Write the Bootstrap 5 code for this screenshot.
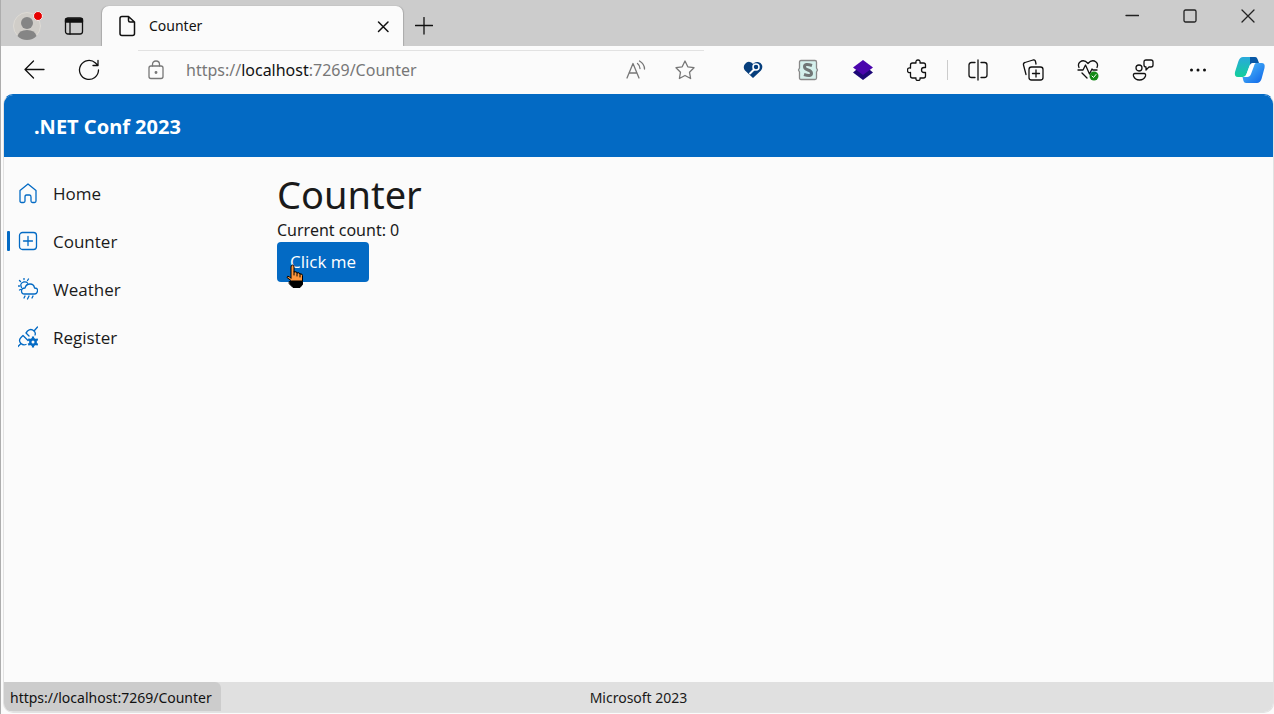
<!DOCTYPE html>
<html lang="en">
<head>
<meta charset="utf-8">
<meta name="viewport" content="width=device-width, initial-scale=1">
<title>Counter</title>
<link href="https://cdn.jsdelivr.net/npm/bootstrap@5.3.0/dist/css/bootstrap.min.css" rel="stylesheet">
<style>
:root { --blue: #036ac4; --page: #fbfbfb; }
body { font-family: "Noto Sans", "Open Sans", sans-serif; font-size: 16px; line-height: 24px; color: #1a1a1a; background: var(--page); }
button { color: inherit; }
svg { display: block; fill: none; stroke: currentColor; stroke-width: 1.3; stroke-linecap: round; stroke-linejoin: round; flex: none; }
.solid { stroke: none; }
.browser { border-left: 1px solid #adadad; }
.tab-strip { height: 46px; background: #ccc; color: #111; }
.strip-btn { width: 41px; height: 46px; padding: 5px 0 0; border: 0; background: none; display: grid; place-items: center; }
.profile { width: 52px; }
.page-tab { width: 301px; height: 40px; margin-left: 8px; padding: 0 12px 0 15px; background: var(--page); border-radius: 7px 7px 0 0; font-size: 14px; box-shadow: -1px 0 1px #aaa, 1px 0 1px #aaa; clip-path: inset(-2px -3px 0); }
.page-tab .page-icon { margin-right: 12px; }
.plain-btn { border: 0; background: none; padding: 0; }
.window-btns { gap: 6px; }
.window-btn { width: 52px; height: 32px; display: grid; place-items: center; color: #222; }
.toolbar { height: 48px; padding-left: 5px; color: #111; }
.tool-btn { width: 55px; height: 46px; display: grid; place-items: center; border: 0; background: none; padding: 0; flex: none; }
.copilot { width: 49px; }
.address { height: 40px; margin: 0 16px 0 6px; padding: 0 0 0 20px; border-radius: 20px; color: #777; font-size: 16px; position: relative; }
.address::before { content: ""; position: absolute; top: 0; left: 16px; right: 5px; border-top: 1px solid #e2e2e2; }
.address b { font-weight: 400; color: #111; }
.address-btn { width: 49px; height: 36px; display: grid; place-items: center; color: #777; }
.tool-rule { height: 20px; width: 1px; margin: 0 2px; background: #ccc; }
.app { margin: 0 0 1px 2px; border: 1px solid #e2e2e2; border-top-color: var(--blue); border-radius: 10px; overflow: hidden; }
.app-header { height: 62px; background: var(--blue); color: #fff; padding: 2px 30px 0; font-size: 20px; font-weight: 700; }
.app-nav { width: 240px; padding-top: 16px; flex: none; }
.nav-item-link { height: 40px; padding-left: 14px; gap: 15px; font-family: "Open Sans", "Noto Sans", sans-serif; font-size: 17px; color: #1a1a1a; text-decoration: none; position: relative; }
.nav-item-link span { padding-top: 2px; }
.nav-item-link svg { color: var(--blue); }
.nav-item-link.active::before { content: ""; position: absolute; left: 3px; top: 10px; width: 3px; height: 20px; border-radius: 1px; background: var(--blue); }
.app-main { padding: 13px 16px 16px 33px; }
.app-main h1 { font-size: 38px; line-height: 48px; font-weight: 400; margin: 0; }
.count-btn { height: 40px; padding: 0 13px; border: 0; border-radius: 4px; background: var(--blue); color: #fff; font-family: "Open Sans", "Noto Sans", sans-serif; font-size: 17px; }
.pointer { position: absolute; left: 8px; top: 22px; stroke-width: 1; }
.app-footer { height: 30px; padding-top: 1px; background: #e0e0e0; font-size: 14px; position: relative; }
.status { position: absolute; left: 0; top: 0; height: 29px; padding: 2px 9px 0 6px; background: #ccc; border-radius: 0 6px 0 0; color: #111; }
</style>
</head>
<body>
<div class="browser min-vh-100 d-flex flex-column">
  <div class="tab-strip d-flex">
    <button class="strip-btn profile" aria-label="Profile">
      <svg class="solid" width="32" height="32" viewBox="0 0 32 32"><circle cx="16" cy="16" r="13.500" fill="#d0cdc8" stroke="#dedbd5" stroke-width="1"/><circle cx="16" cy="13" r="6" fill="#858585"/><path d="M6.500 26Q8 20 16 20t9.500 6q-3.500 4-9.500 4t-9.500-4z" fill="#858585"/><circle cx="27" cy="6" r="4.500" fill="#e60000" stroke="#eee" stroke-width="1"/></svg>
    </button>
    <button class="strip-btn" aria-label="Tab actions">
      <svg width="20" height="20" viewBox="0 0 20 20"><rect x="1.500" y="2" width="17" height="16" rx="2.500"/><path d="M6 6v12"/><path d="M1.500 3h17v3h-17z" fill="currentColor"/></svg>
    </button>
    <div class="page-tab d-flex align-items-center align-self-end">
      <svg class="page-icon" width="20" height="22" viewBox="0 0 20 22"><path d="M5 1.500h6.500L17.500 7v11.500q0 2-2 2H5q-2 0-2-2v-15q0-2 2-2zM11.500 1.500v4q0 1.500 1.500 1.500h4.500" stroke-width="1.500"/></svg>
      <span class="flex-grow-1">Counter</span>
      <button class="plain-btn" aria-label="Close tab"><svg width="16" height="16" viewBox="0 0 16 16"><path d="M3.500 4l9.500 9.500M13 4l-9.500 9.500" stroke-width="1.500"/></svg></button>
    </div>
    <button class="strip-btn" aria-label="New tab"><svg width="18" height="18" viewBox="0 0 18 18"><path d="M.5 8.500h17M9 .5v16.500"/></svg></button>
    <div class="window-btns ms-auto d-flex">
      <button class="plain-btn window-btn" aria-label="Minimize"><svg width="14" height="14" viewBox="0 0 14 14"><path d="M1 6.500h12.500"/></svg></button>
      <button class="plain-btn window-btn" aria-label="Maximize"><svg width="14" height="14" viewBox="0 0 14 14"><rect x="1" y="1" width="12" height="12" rx="1.500"/></svg></button>
      <button class="plain-btn window-btn" aria-label="Close"><svg width="14" height="14" viewBox="0 0 14 14"><path d="M1 1l12 12M13 1L1 13"/></svg></button>
    </div>
  </div>

  <div class="toolbar d-flex align-items-center">
    <button class="tool-btn" aria-label="Back"><svg width="22" height="20" viewBox="0 0 22 20"><path d="M2 9.500h19M10.500 1L2 9.500l8.500 8.500"/></svg></button>
    <button class="tool-btn" aria-label="Refresh"><svg width="22" height="22" viewBox="0 0 22 22"><path d="M20.500 11a9.500 9.500 0 1 1-3-7L20 6.500M20 1.500v5h-5"/></svg></button>
    <div class="address flex-grow-1 d-flex align-items-center">
      <svg class="ms-1 me-3" width="20" height="20" viewBox="0 0 20 20"><rect x="3" y="6" width="14" height="12.500" rx="2"/><path d="M6.500 6V4.500q0-3.500 3.500-3.500t3.500 3.500V6"/><circle cx="10" cy="12.500" r=".8" fill="currentColor"/></svg>
      <div class="flex-grow-1 ms-1" role="textbox" contenteditable="true" spellcheck="false" aria-label="Address">https://<b>localhost</b>:7269/Counter</div>
      <button class="plain-btn address-btn" aria-label="Read aloud"><svg width="20" height="20" viewBox="0 0 20 20"><path d="M1 18L7 3.500 13 18M3 13h8M11.500 3.500q2.500 2 2.500 5M13.500 1q5 3 5 8"/></svg></button>
      <button class="plain-btn address-btn" aria-label="Favorite"><svg width="22" height="22" viewBox="0 0 22 22"><path d="M11 2l2.800 5.800 6.200.9-4.500 4.500 1.100 6.300L11 16.500l-5.600 3 1.100-6.300L2 8.700l6.200-.9z"/></svg></button>
    </div>
    <button class="tool-btn" aria-label="Health extension"><svg class="solid" width="20" height="18" viewBox="0 0 20 18"><path d="M10 17L2 9.500Q-.5 6 2 3t5-2q2 .5 3 2 2-2.500 5-2t4 3q1 3-1 5.500z" fill="#063e7c"/><circle cx="13" cy="6" r="3" stroke="#fff" stroke-width="1.500"/><path d="M11 8.500L7 12.500" stroke="#fff" stroke-width="2"/></svg></button>
    <button class="tool-btn" aria-label="Script extension"><svg width="22" height="22" viewBox="0 0 22 22"><path d="M4 1.500h14q1.500 0 1.500 1.500v6l1 2-1 2v6q0 1.500-1.500 1.500H4q-1.500 0-1.500-1.500v-6l-1-2 1-2V3q0-1.500 1.500-1.500z" fill="#d4f0ec" stroke="#888"/><path d="M15 6.500q-7.500-2.500-7.500 1.300 0 2 3.500 3.200t3.500 3.200q0 3.800-7.500 1.300" stroke="#707676" stroke-width="3" stroke-linecap="butt"/></svg></button>
    <button class="tool-btn" aria-label="Layers extension"><svg class="solid" width="22" height="22" viewBox="0 0 22 22"><path d="M1 13.500l3-2.500h14l3 2.500L11 21z" fill="#1d0878"/><path d="M1 8.500L11 1l10 7.500L11 16z" fill="#4b05ad"/></svg></button>
    <button class="tool-btn" aria-label="Extensions"><svg width="22" height="22" viewBox="0 0 22 22"><path d="M5.500 4H9q-.5-3 2-3t2 3h3.500q2 0 2 2v2.500h-1.500q-2.500 0-2.500 2.500t2.500 2.500h1.500V17q0 2-2 2H13q.5 2.500-2 2.500T9 19H5.500q-2 0-2-2v-3.500q-3 .5-3-2.300t3-2.200V6q0-2 2-2z"/></svg></button>
    <span class="tool-rule"></span>
    <button class="tool-btn" aria-label="Split screen"><svg width="22" height="22" viewBox="0 0 22 22"><path d="M8 3.500H4.500Q2 3.500 2 6v10q0 2.500 2.500 2.500H8M14 3.500h3.500Q20 3.500 20 6v10q0 2.500-2.500 2.500H14M11 1v20"/></svg></button>
    <button class="tool-btn" aria-label="Collections"><svg width="22" height="22" viewBox="0 0 22 22"><rect x="7" y="8" width="14" height="13" rx="2.500"/><path d="M14 11v7M10.500 14.500h7M4 15.500L1.500 6q-.5-2 1.500-2.500L11 1q2-.5 2.500 1.500L14 5"/></svg></button>
    <button class="tool-btn" aria-label="Browser essentials"><svg width="22" height="22" viewBox="0 0 22 22"><path d="M2 8.500Q.5 5 3 3q4-3 8 1.500Q15 0 19 3q2.500 2 1 5.500M1 11h5l2.500-5 4 9 2.500-5 1 1h4M5 14l5 5"/><circle class="solid" cx="17" cy="17" r="4.500" fill="#138a16"/><path d="M15 17l1.500 1.500 2.500-3" stroke="#fff" stroke-width="1"/></svg></button>
    <button class="tool-btn" aria-label="Feedback"><svg width="22" height="22" viewBox="0 0 22 22"><circle cx="7" cy="9" r="3"/><path d="M3 14.500h9q2 0 1.500 2.500-1.500 4-6 4T1.500 17q-.5-2.500 1.500-2.500zM14 1h5q2 0 2 2v3q0 2-2 2h-2l-3 3V8q-2 0-2-2V3q0-2 2-2z"/></svg></button>
    <button class="tool-btn" aria-label="Settings"><svg class="solid" width="22" height="22" viewBox="0 0 22 22"><g fill="currentColor"><circle cx="4.500" cy="11" r="1.500"/><circle cx="11" cy="11" r="1.500"/><circle cx="17.500" cy="11" r="1.500"/></g></svg></button>
    <button class="tool-btn copilot" aria-label="Copilot"><svg class="solid" width="32" height="28" viewBox="0 0 32 28"><defs><linearGradient id="cpa" x2="0" y2="1"><stop stop-color="#2aa9dc"/><stop offset="1" stop-color="#13cf9b"/></linearGradient><linearGradient id="cpb" x2="1" y2="1"><stop stop-color="#56c3fb"/><stop offset="1" stop-color="#0b62e8"/></linearGradient></defs><path d="M9 1h11q2 0 2.500 2l1 4h-5q-2 0-3 3l-3 8q-1 3-4 3H4q-4 0-3-5L4.500 5Q6 1 9 1z" fill="url(#cpa)"/><path d="M16 1h5q2 0 2.500 2l1.500 4h-6q-2 0-3 3z" fill="#0858a6"/><path d="M23 27H12q-2 0-2.500-2l-1-4h4q2 0 3-3l3-8q1-3 4-3h5q4 0 3 5l-3 11q-1.500 4-4.500 4z" fill="url(#cpb)"/><path d="M21.500 7H19q-2.500 0-3.500 3l-3 8q-1 3-3.500 3h4q3 0 4-3l3-8q.5-2 1.500-3z" fill="#fff"/></svg></button>
  </div>

  <div class="app flex-grow-1 d-flex flex-column">
    <header class="app-header d-flex align-items-center">.NET Conf 2023</header>
    <div class="d-flex flex-grow-1">
      <nav class="app-nav d-flex flex-column gap-2">
        <a href="#" class="nav-item-link d-flex align-items-center"><svg width="20" height="22" viewBox="0 0 20 22"><path d="M2 8.500L10 2l8 6.500V19q0 1.500-1.500 1.500h-2q-1.500 0-1.500-1.500v-4q0-2-1.500-2h-3Q7 13 7 15v4q0 1.500-1.500 1.500h-2Q2 20.500 2 19z"/></svg><span>Home</span></a>
        <a href="#" class="nav-item-link active d-flex align-items-center" aria-current="page"><svg width="20" height="20" viewBox="0 0 20 20"><rect x="1.500" y="1.500" width="17" height="17" rx="3"/><path d="M10 5.500v9M5.500 10h9"/></svg><span>Counter</span></a>
        <a href="#" class="nav-item-link d-flex align-items-center"><svg width="20" height="22" viewBox="0 0 20 22"><path d="M6.500 16q-3 0-3-3t3.500-3q1-4 5-4t4.500 4q3.500 0 3 3t-3 3zM7 18l-1 2M11 18l-1.500 3M15 18l-1 2M3.500 9.500q-2-4 2-5.500 3-.5 4 1M6 0v1.500M1.500 2.500l1 1M.5 8h1M10.500 1l-1 1.500M1.500 12l1-.5"/></svg><span>Weather</span></a>
        <a href="#" class="nav-item-link d-flex align-items-center"><svg width="20" height="22" viewBox="0 0 20 22"><path d="M0 20.500l3-3M3 17.500q-3-3 0-6l2-2 5 5M3 17.500q2 2 5 1M8 7l1.500-2q3.500-3 6.500 0M16 5l3.500-4M16 5q2 2 1 4M8 7l3 3"/><circle cx="15" cy="16" r="2.700" stroke-width="2.400"/><path d="M15 10.500v2M15 19.500v2M10.200 13.200l1.800 1M18 17.800l1.800 1M10.200 18.800l1.800-1M18 14.200l1.800-1" stroke-width="2.200" stroke-linecap="butt"/></svg><span>Register</span></a>
      </nav>
      <main class="app-main flex-grow-1">
        <h1>Counter</h1>
        <div>Current count: 0</div>
        <div class="position-relative d-inline-block">
          <button class="count-btn d-block">Click me</button>
          <svg class="pointer" width="20" height="25" viewBox="0 0 20 25"><path d="M6 14V3q0-2 1.500-2T9 3v5q3-1 3 1 2.500-1 3 1 2.500-.5 2.500 1.500V17H6.500L2 13.500q0-2 2-1z" fill="#ff963c" stroke="#000"/><path d="M9 8v3M12 9v3M15 10v3" stroke="#000"/><path d="M4.500 17.500h13v3L15 23.500H8L4.500 20z" fill="#000" stroke="#000"/></svg>
        </div>
      </main>
    </div>
    <footer class="app-footer d-flex align-items-center justify-content-center">Microsoft 2023
      <div class="status d-flex align-items-center">https://localhost:7269/Counter</div>
    </footer>
  </div>
</div>
<script src="https://cdn.jsdelivr.net/npm/bootstrap@5.3.0/dist/js/bootstrap.bundle.min.js"></script>
</body>
</html>
